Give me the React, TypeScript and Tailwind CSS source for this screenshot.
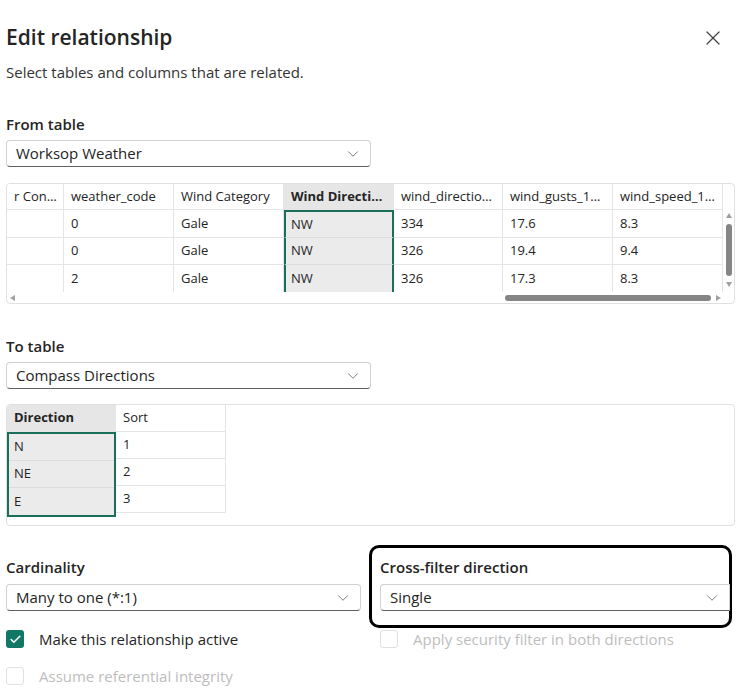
import React from 'react';
import { ChevronDown, X, Check } from 'lucide-react';

const FONT = { fontFamily: '"Open Sans", "Noto Sans", Arial, sans-serif' };

const Dropdown = ({ value, className = '' }: { value: string; className?: string }) => (
  <div
    className={`flex h-[27px] items-center justify-between rounded-[4px] border border-[#d1d1d1] border-b-[#616161] bg-white pl-[9px] pr-[8px] text-[15px] text-[#242424] ${className}`}
  >
    <span>{value}</span>
    <ChevronDown size={18} strokeWidth={1.1} className="text-[#616161]" />
  </div>
);

const Checkbox = ({ checked, disabled, label }: { checked?: boolean; disabled?: boolean; label: string }) => (
  <div className="flex items-center gap-[15px]">
    {checked ? (
      <div className="flex h-[18px] w-[18px] items-center justify-center rounded-[3px] bg-[#117865]">
        <Check size={13} strokeWidth={3} className="text-white" />
      </div>
    ) : (
      <div className="h-[18px] w-[18px] rounded-[3px] border border-[#e0e0e0] bg-white" />
    )}
    <span className={`text-[15px] leading-[22px] ${disabled ? 'text-[#bdbdbd]' : 'text-[#242424]'}`}>{label}</span>
  </div>
);

const weatherCols = [
  { title: 'r Con…', w: 57 },
  { title: 'weather_code', w: 110 },
  { title: 'Wind Category', w: 110 },
  { title: 'Wind Directi…', w: 110, key: true },
  { title: 'wind_directio…', w: 109 },
  { title: 'wind_gusts_1…', w: 110 },
  { title: 'wind_speed_1…', w: 110 },
];

const weatherRows = [
  ['', '0', 'Gale', 'NW', '334', '17.6', '8.3'],
  ['', '0', 'Gale', 'NW', '326', '19.4', '9.4'],
  ['', '2', 'Gale', 'NW', '326', '17.3', '8.3'],
];

const WeatherTable = () => (
  <div className="mt-[16px] mr-[2px] overflow-hidden rounded-[4px] border border-[#e0e0e0] bg-white text-[13px] text-[#242424]">
    <div className="flex">
      <div className="flex flex-col">
        <div className="flex h-[26px]">
          {weatherCols.map((c, i) => (
            <div
              key={i}
              style={{ width: c.w }}
              className={`flex items-center overflow-hidden whitespace-nowrap border-r border-b border-[#e5e5e5] pl-[7px] ${
                c.key ? 'bg-[#e6e6e6] font-bold' : 'bg-white'
              } ${i === 0 ? 'pl-0' : ''}`}
            >
              {c.title}
            </div>
          ))}
        </div>
        {weatherRows.map((r, ri) => (
          <div key={ri} className={`flex ${ri === 0 ? 'h-[28px]' : 'h-[27px]'}`}>
            {r.map((v, ci) => {
              const key = weatherCols[ci].key;
              return (
                <div
                  key={ci}
                  style={{ width: weatherCols[ci].w }}
                  className={`flex items-center ${
                    key
                      ? `border-x-2 border-[#1b6f5a] bg-[#ebebeb] pl-[5px] ${ri === 0 ? 'border-t-2' : ''} ${
                          ri < 2 ? 'border-b border-b-[#dcdcdc]' : ''
                        }`
                      : `border-r border-[#e5e5e5] pl-[7px] ${ri < 2 ? 'border-b' : ''}`
                  }`}
                >
                  {v}
                </div>
              );
            })}
          </div>
        ))}
      </div>
      <div className="flex w-[14px] flex-col items-center pt-[26px]">
        <span className="mt-[3px] h-0 w-0 border-x-[3.5px] border-b-[5px] border-x-transparent border-b-[#a0a0a0]" />
        <span className="mt-[6px] h-[52px] w-[6px] rounded-full bg-[#858585]" />
        <span className="mt-[6px] h-0 w-0 border-x-[3.5px] border-t-[5px] border-x-transparent border-t-[#a0a0a0]" />
      </div>
    </div>
    <div className="flex h-[11px] items-center">
      <span className="ml-[3px] h-0 w-0 border-y-[3.5px] border-r-[5px] border-y-transparent border-r-[#a0a0a0]" />
      <span className="ml-[490px] h-[6px] w-[206px] rounded-full bg-[#858585]" />
      <span className="ml-[5px] h-0 w-0 border-y-[3.5px] border-l-[5px] border-y-transparent border-l-[#a0a0a0]" />
    </div>
  </div>
);

const compassRows = [
  ['N', '1'],
  ['NE', '2'],
  ['E', '3'],
];

const CompassTable = () => (
  <div className="mt-[15px] mr-[2px] h-[122px] overflow-hidden rounded-[4px] border border-[#e0e0e0] bg-white text-[13px] text-[#242424]">
    <div className="flex h-[27px]">
      <div className="flex w-[109px] items-center border-r border-b border-[#e5e5e5] bg-[#e6e6e6] pl-[7px] font-bold">
        Direction
      </div>
      <div className="flex w-[110px] items-center border-r border-b border-[#e5e5e5] pl-[7px]">Sort</div>
    </div>
    <div className="flex">
      <div className="flex w-[109px] flex-col border-2 border-[#1b6f5a] bg-[#ebebeb]">
        {compassRows.map((r, i) => (
          <div
            key={i}
            className={`flex h-[27px] items-center pl-[5px] ${i < 2 ? 'border-b border-[#dcdcdc]' : 'h-[26px]'}`}
          >
            {r[0]}
          </div>
        ))}
      </div>
      <div className="flex w-[110px] flex-col">
        {compassRows.map((r, i) => (
          <div key={i} className="flex h-[27px] items-center border-r border-b border-[#e5e5e5] pl-[7px]">
            {r[1]}
          </div>
        ))}
      </div>
    </div>
  </div>
);

export default function App() {
  return (
    <div style={FONT} className="h-[688px] w-[737px] overflow-hidden bg-white pl-[6px] text-[#242424]">
      <div className="flex items-start justify-between pt-[21px] pr-[12px]">
        <h1 className="text-[21px] font-semibold leading-[32px]">Edit relationship</h1>
        <X size={24} strokeWidth={1.2} className="mt-[5px] text-[#424242]" />
      </div>
      <p className="mt-[9px] text-[15px] leading-[20px] text-[#333]">Select tables and columns that are related.</p>

      <h2 className="mt-[32px] text-[15px] font-semibold leading-[20px]">From table</h2>
      <Dropdown value="Worksop Weather" className="mt-[6px] w-[365px]" />
      <WeatherTable />

      <h2 className="mt-[32px] text-[15px] font-semibold leading-[20px]">To table</h2>
      <Dropdown value="Compass Directions" className="mt-[6px] w-[365px]" />
      <CompassTable />

      <div className="mt-[19px] mr-[5px] grid grid-cols-[355px_1fr] items-start gap-x-[8px]">
        <div className="pt-[12px]">
          <h2 className="text-[15px] font-semibold leading-[20px]">Cardinality</h2>
          <Dropdown value="Many to one (*:1)" className="mt-[7px] w-[355px]" />
        </div>
        <div className="rounded-[10px] border-[3px] border-black pt-[9px] pb-[14px] pl-[8px]">
          <h2 className="text-[15px] font-semibold leading-[20px]">Cross-filter direction</h2>
          <Dropdown value="Single" className="mt-[7px] -mr-px rounded-r-none" />
        </div>
      </div>

      <div className="mt-0 grid grid-cols-[374px_1fr]">
        <Checkbox checked label="Make this relationship active" />
        <Checkbox disabled label="Apply security filter in both directions" />
      </div>
      <div className="mt-[15px]">
        <Checkbox disabled label="Assume referential integrity" />
      </div>
    </div>
  );
}
